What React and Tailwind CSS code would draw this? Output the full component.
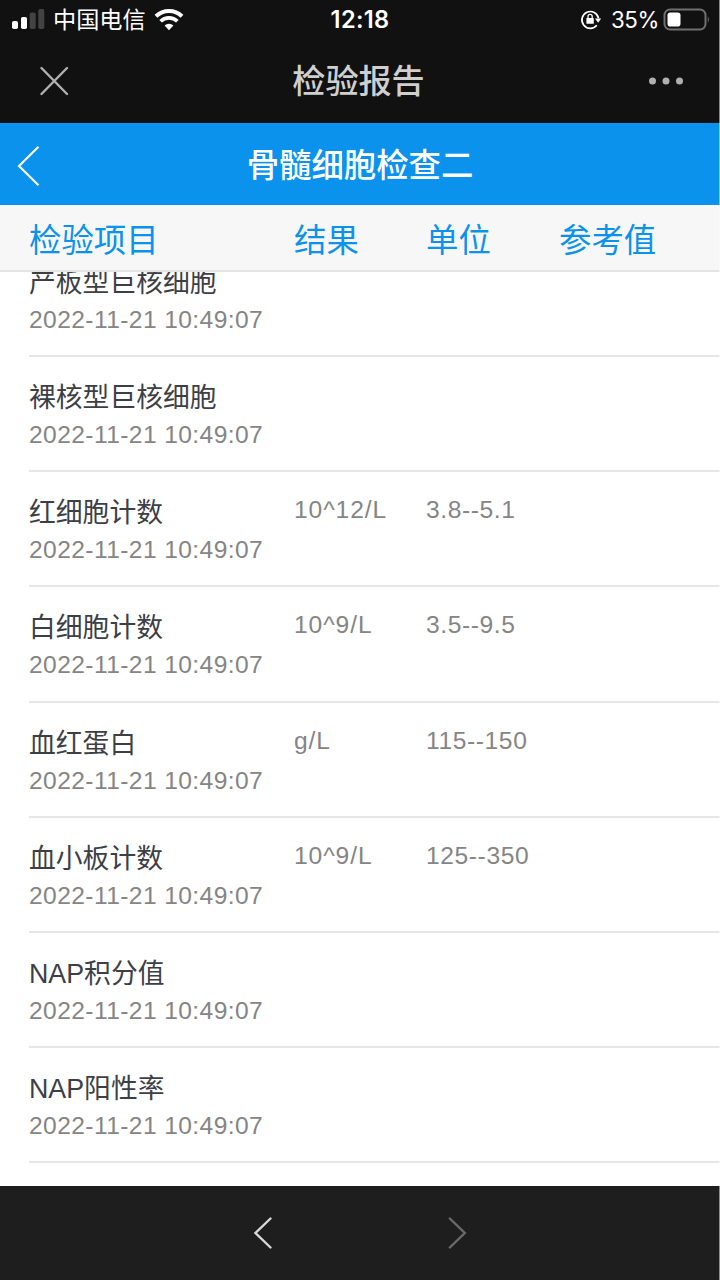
const rows = [
  { name: "产板型巨核细胞" },
  { name: "裸核型巨核细胞" },
  { name: "红细胞计数", result: "10^12/L", unit: "3.8--5.1" },
  { name: "白细胞计数", result: "10^9/L", unit: "3.5--9.5" },
  { name: "血红蛋白", result: "g/L", unit: "115--150" },
  { name: "血小板计数", result: "10^9/L", unit: "125--350" },
  { name: "NAP积分值" },
  { name: "NAP阳性率" },
];

function StatusBar() {
  return (
    <div className="flex h-10 items-center pl-3 text-white">
      <svg className="mr-[8px] h-6 w-[33px] shrink-0" viewBox="0 -3 33 24">
        <rect x="0" y="10" width="6" height="8" rx="1.8" fill="#fff" />
        <rect x="9" y="6" width="6" height="12" rx="1.8" fill="#fff" />
        <rect x="17.7" y="1.5" width="6" height="16.5" rx="1.8" fill="#434343" />
        <rect x="26.3" y="-2" width="6" height="20" rx="1.8" fill="#434343" />
      </svg>
      <span className="w-[93px] text-[23.2px] leading-10 whitespace-nowrap">中国电信</span>
      <svg className="ml-2 h-[22px] w-[30px] shrink-0" viewBox="0 0 30 22">
        <g fill="none" stroke="#fff">
          <path d="M2 7.3 A18.6 18.6 0 0 1 28 7.3" strokeWidth="4" />
          <path d="M6.6 12.3 A12 12 0 0 1 23.4 12.3" strokeWidth="3.7" />
        </g>
        <path d="M15 21.2 L10.6 16.6 A6.4 6.4 0 0 1 19.4 16.6 Z" fill="#fff" />
      </svg>
      <span className="ml-[145px] flex w-[62px] justify-center font-[Inter] text-[23.6px] font-semibold tracking-[0.3px] whitespace-nowrap">12:18</span>
      <svg className="ml-[189px] h-[22px] w-[22px] shrink-0" viewBox="0 0 22 22">
        <path d="M16.8 16.3 A8.4 8.4 0 1 1 18.6 9.4" fill="none" stroke="#fff" strokeWidth="1.7" />
        <path d="M15 9.4 h6.2 l-3.1 4.3z" fill="#fff" />
        <rect x="6.4" y="9" width="7.4" height="5.8" rx="0.6" fill="#fff" />
        <path d="M8 9.4 V7.4 a2.1 2.1 0 0 1 4.2 0 V9.4" fill="none" stroke="#fff" strokeWidth="1.3" />
      </svg>
      <span className="ml-[9px] w-[48px] font-[Inter] text-[22.3px] tracking-[-0.4px] whitespace-nowrap">35%</span>
      <svg className="ml-1 h-6 w-[47px] shrink-0" viewBox="0 1 47 24">
        <rect x="1.5" y="2.5" width="41" height="20" rx="5.5" fill="none" stroke="#707070" strokeWidth="2" />
        <rect x="4.5" y="5.5" width="13" height="14" rx="2.8" fill="#fff" />
        <path d="M44.8 9.2 Q47 12.5 44.8 15.8 Z" fill="#707070" />
      </svg>
    </div>
  );
}

function TitleBar() {
  return (
    <div className="grid h-[83px] grid-cols-[132px_1fr_132px] items-center">
      <svg className="mb-0.5 ml-10 h-[30px] w-[30px]" viewBox="0 0 30 30">
        <path d="M1.5 2 L27 28 M27 2 L1.5 28" stroke="#b0b0b0" strokeWidth="2.4" strokeLinecap="round" />
      </svg>
      <h1 className="pr-[3px] text-center text-[33.1px] leading-[82px] font-medium text-[#cfcfcf]">检验报告</h1>
      <svg className="mb-0.5 ml-[60px] h-2 w-9" viewBox="0 0 36 8">
        <circle cx="4.5" cy="4" r="3.5" fill="#b0b0b0" />
        <circle cx="18" cy="4" r="3.5" fill="#b0b0b0" />
        <circle cx="31.5" cy="4" r="3.5" fill="#b0b0b0" />
      </svg>
    </div>
  );
}

function Row({ name, result, unit }) {
  return (
    <li className="ml-[29px] grid h-[115.17px] shrink-0 grid-cols-[265px_132px_1fr] border-b-2 border-[#e6e6e6] pt-[20px] text-[24.6px] leading-[36px] tracking-[0.4px] text-[#858585]">
      <div className="pt-0.5">
        <div className="text-[26.8px] leading-[38px] tracking-normal text-[#3c4046]">{name}</div>
        <div>2022-11-21 10:49:07</div>
      </div>
      <div className="tracking-[0.9px]">{result}</div>
      <div className="tracking-[0.6px]">{unit}</div>
    </li>
  );
}

export default function App() {
  return (
    <div className="relative flex h-[1280px] w-[720px] flex-col overflow-hidden bg-white font-['Liberation_Sans','Noto_Sans_CJK_SC',sans-serif] after:absolute after:inset-y-0 after:right-0 after:w-px after:bg-white/50">
      <header className="h-[123px] shrink-0 bg-[#111111]">
        <StatusBar />
        <TitleBar />
      </header>
      <div className="grid h-[82px] shrink-0 grid-cols-[120px_1fr_120px] items-center bg-[#0a92ed]">
        <svg className="mt-[3px] ml-[17px] h-10 w-6" viewBox="0 0 24 40">
          <path d="M21.5 0.8 L2 20 L21.5 39.2" fill="none" stroke="#fff" strokeWidth="2.1" />
        </svg>
        <h2 className="pt-[5px] text-center text-[32.4px] leading-[77px] font-medium text-white">骨髓细胞检查二</h2>
      </div>
      <div className="grid h-[67px] shrink-0 grid-cols-[265px_132px_132px_1fr] border-b-2 border-[#e4e4e4] bg-[#f7f7f7] pt-[6px] pl-[29px] text-[32.4px] leading-[61px] text-[#0a92ed]">
        <span>检验项目</span>
        <span>结果</span>
        <span>单位</span>
        <span className="pl-px">参考值</span>
      </div>
      <main className="min-h-0 flex-1 overflow-hidden">
        <ul className="-mt-[30px] flex flex-col">
          {rows.map((row) => (
            <Row key={row.name} {...row} />
          ))}
        </ul>
      </main>
      <footer className="flex h-[94px] shrink-0 items-center bg-[#1e1e1e] pl-[253px]">
        <svg className="h-[34px] w-5" viewBox="0 0 20 34">
          <path d="M17.5 2.5 L2.5 17 L17.5 31.5" fill="none" stroke="#d8d8d8" strokeWidth="2.4" strokeLinecap="round" />
        </svg>
        <svg className="ml-[174px] h-[34px] w-5" viewBox="0 0 20 34">
          <path d="M2.8 2.5 L17.8 17 L2.8 31.5" fill="none" stroke="#6a6a6a" strokeWidth="2.4" strokeLinecap="round" />
        </svg>
      </footer>
    </div>
  );
}
